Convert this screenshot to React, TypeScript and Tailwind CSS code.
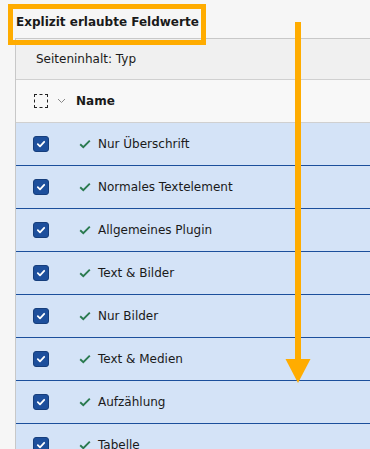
import React from "react";

const rows = [
  "Nur Überschrift",
  "Normales Textelement",
  "Allgemeines Plugin",
  "Text & Bilder",
  "Nur Bilder",
  "Text & Medien",
  "Aufzählung",
  "Tabelle",
];

function CheckedBox() {
  return (
    <div className="w-[16px] h-[16px] rounded-[3px] bg-[#1d4f9c] border border-[#163e7c] flex items-center justify-center">
      <svg width="10" height="10" viewBox="0 0 10 10" fill="none">
        <path d="M1.8 5.2 L4 7.3 L8.2 2.8" stroke="white" strokeWidth="1.8" strokeLinecap="round" strokeLinejoin="round" />
      </svg>
    </div>
  );
}

function GreenCheck() {
  return (
    <svg width="12" height="10" viewBox="0 0 12 10" fill="none">
      <path d="M1.2 5.2 L4.3 8.2 L10.8 1.6" stroke="#2a7a4f" strokeWidth="1.9" />
    </svg>
  );
}

export default function App() {
  return (
    <div
      className="relative w-[370px] h-[449px] overflow-hidden bg-[#f6f6f6] text-[#1a1a1a]"
      style={{ fontFamily: "'DejaVu Sans', Verdana, sans-serif" }}
    >
      <div className="h-[38px] pl-[16px] pt-[14px] text-[12px] leading-[16px] font-bold">
        Explizit erlaubte Feldwerte
      </div>
      <div className="ml-[15px] border-l border-t border-[#c8c8c8]">
        <div className="h-[41px] border-b border-[#d0d0d0] bg-[#f0f0f0] flex items-center pl-[20px] text-[12px]">
          Seiteninhalt: Typ
        </div>
        <div className="h-[43px] border-b border-[#d0d0d0] bg-[#f8f8f8] flex items-center pl-[18px]">
          <div className="w-[14px] h-[14px] border border-dashed border-[#222]" />
          <svg className="ml-[9px]" width="9" height="6" viewBox="0 0 9 6" fill="none">
            <path d="M1 1 L4.5 4.5 L8 1" stroke="#888" strokeWidth="1" />
          </svg>
          <span className="ml-[10px] text-[12px] font-bold">Name</span>
        </div>
        {rows.map((r) => (
          <div
            key={r}
            className="h-[43px] border-b border-[#1c4f9c] bg-[#d4e3f7] flex items-center pl-[17px]"
          >
            <CheckedBox />
            <div className="ml-[30px] w-[12px] flex items-center">
              <GreenCheck />
            </div>
            <span className="ml-[7px] text-[12px]">{r}</span>
          </div>
        ))}
      </div>

      {/* annotation box */}
      <div className="absolute left-[8px] top-[4px] w-[198px] h-[41px] border-[5px] border-[#ffac00]" />
      {/* annotation arrow */}
      <svg className="absolute left-0 top-0" width="370" height="449" viewBox="0 0 370 449">
        <rect x="295" y="22" width="6" height="338" fill="#ffac00" />
        <polygon points="285.5,359 310.5,359 298,383" fill="#ffac00" />
      </svg>
    </div>
  );
}
